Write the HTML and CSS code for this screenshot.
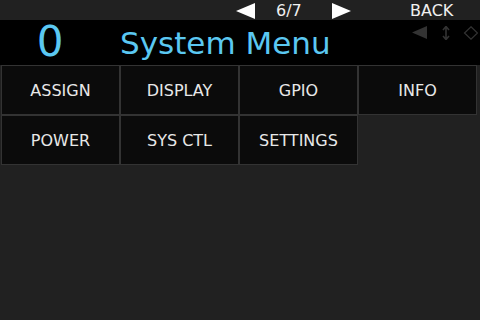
FILE: index.html
```html
<html>
<head>
  <title>System Menu</title>
  <link rel="stylesheet" href="styles.css">
</head>
<body>
  <div class="topbar">
    <span class="arrow left"></span>
    <span class="page">6/7</span>
    <span class="arrow right"></span>
    <span class="back">BACK</span>
  </div>
  <div class="header">
    <div class="num">0</div>
    <div class="title">System Menu</div>
    <div class="icons">
      <svg width="66" height="14" viewBox="0 0 66 14">
        <polygon points="0,6.5 15,0 15,13" fill="#333"/>
        <path d="M34 1 V13 M31 4 L34 0.5 L37 4 M31 10 L34 13.5 L37 10" stroke="#333" stroke-width="1.6" fill="none"/>
        <polygon points="59,0.8 65.5,7 59,13.2 52.5,7" stroke="#333" stroke-width="1.2" fill="none"/>
      </svg>
    </div>
  </div>
  <div class="grid">
    <div class="cell">ASSIGN</div>
    <div class="cell">DISPLAY</div>
    <div class="cell">GPIO</div>
    <div class="cell">INFO</div>
    <div class="cell">POWER</div>
    <div class="cell">SYS CTL</div>
    <div class="cell">SETTINGS</div>
  </div>
</body>
</html>
```
FILE: styles.css
```css
body {
  margin: 0;
  width: 480px;
  height: 320px;
  overflow: hidden;
  background-color: #212121;
  font-family: "DejaVu Sans", sans-serif;
  color: #f0f0f0;
}
.topbar {
  height: 20px;
  display: flex;
  align-items: flex-end;
  padding-left: 236px;
  font-size: 16px;
  line-height: 18px;
}
.arrow {
  width: 0;
  height: 0;
  margin-bottom: 1px;
  border-top: 8.5px solid transparent;
  border-bottom: 8.5px solid transparent;
}
.arrow.left {
  border-right: 19px solid #fff;
}
.arrow.right {
  border-left: 19px solid #fff;
}
.page {
  width: 56px;
  padding-left: 21px;
}
.back {
  margin-left: 59px;
}
.header {
  height: 45px;
  background-color: #000;
  display: flex;
  align-items: center;
  position: relative;
}
.num {
  width: 100px;
  text-align: center;
  font-size: 42px;
  color: #5bc8f2;
  line-height: 42px;
  margin-top: -2px;
}
.title {
  margin-left: 20px;
  font-size: 31px;
  color: #5bc8f2;
}
.icons {
  position: absolute;
  left: 412px;
  top: 6px;
  display: flex;
}
.grid {
  display: grid;
  grid-template-columns: repeat(4, 119px);
  grid-auto-rows: 50px;
  padding-left: 1px;
}
.cell {
  background-color: #0b0b0b;
  border: 1px solid #333;
  display: flex;
  align-items: center;
  justify-content: center;
  font-size: 16px;
  color: #e8e8e8;
}
```
